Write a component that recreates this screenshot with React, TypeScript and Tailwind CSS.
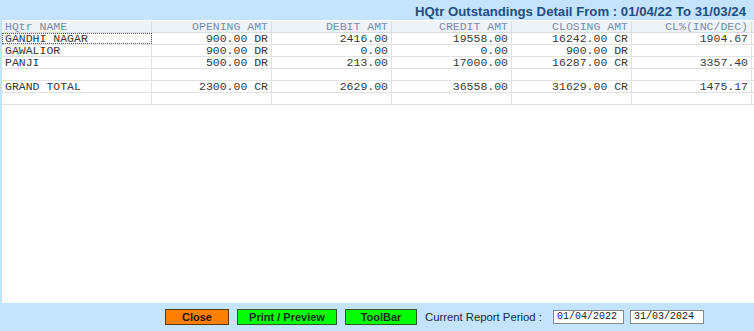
import React from "react";

const cols = [
  { label: "HQtr NAME", w: "w-[150px]", align: "text-left" },
  { label: "OPENING AMT", w: "w-[120px]", align: "text-right" },
  { label: "DEBIT AMT", w: "w-[120px]", align: "text-right" },
  { label: "CREDIT AMT", w: "w-[120px]", align: "text-right" },
  { label: "CLOSING AMT", w: "w-[120px]", align: "text-right" },
  { label: "CL%(INC/DEC)", w: "w-[120px]", align: "text-right" },
];

const rows: string[][] = [
  ["GANDHI NAGAR", "900.00 DR", "2416.00", "19558.00", "16242.00 CR", "1904.67"],
  ["GAWALIOR", "900.00 DR", "0.00", "0.00", "900.00 DR", ""],
  ["PANJI", "500.00 DR", "213.00", "17000.00", "16287.00 CR", "3357.40"],
  ["", "", "", "", "", ""],
  ["GRAND TOTAL", "2300.00 CR", "2629.00", "36558.00", "31629.00 CR", "1475.17"],
  ["", "", "", "", "", ""],
];

export default function App() {
  return (
    <div className="w-[754px] h-[331px] bg-[#c3e4fc] flex flex-col overflow-hidden">
      <div className="h-[20px] flex items-end justify-end pr-[8px] pb-[2px]">
        <span className="text-[13.2px] font-bold text-[#1f4d86] font-['Liberation_Sans',Arial,sans-serif] leading-none">
          HQtr Outstandings Detail From : 01/04/22 To 31/03/24
        </span>
      </div>
      <div className="ml-[2px] h-[283px] bg-white pt-[1px] font-['Liberation_Mono','Courier_New',monospace] text-[11.5px] leading-[11px]">
        <div className="flex h-[12px] bg-[#eef3f8] border-b border-[#d6dde6] text-[#7d8bab]">
          {cols.map((c, i) => (
            <div key={i} className={`${c.w} ${c.align} border-r border-[#d6dde6] px-[3px] overflow-hidden`}>
              {c.label}
            </div>
          ))}
        </div>
        {rows.map((r, ri) => (
          <div key={ri} className="flex h-[12px] border-b border-[#e2e2e2] text-[#3a3a3a]">
            {r.map((v, ci) => (
              <div
                key={ci}
                className={`${cols[ci].w} ${cols[ci].align} border-r border-[#e2e2e2] px-[3px] whitespace-pre overflow-hidden ${
                  ri === 0 && ci === 0 ? "outline outline-1 outline-dotted outline-[#555] -outline-offset-1" : ""
                }`}
              >
                {v}
              </div>
            ))}
          </div>
        ))}
      </div>
      <div className="flex-1 flex items-center pl-[165px] gap-[8px] font-['Liberation_Sans',Arial,sans-serif]">
        <button className="w-[64px] h-[16px] bg-[#ff7f00] border border-[#5a3a10] text-[11px] font-bold text-[#2a1200] leading-none">
          Close
        </button>
        <button className="w-[100px] h-[16px] bg-[#00ff00] border border-[#2a5a2a] text-[11px] font-bold text-[#142e14] leading-none">
          Print / Preview
        </button>
        <button className="w-[72px] h-[16px] bg-[#00ff00] border border-[#2a5a2a] text-[11px] font-bold text-[#142e14] leading-none">
          ToolBar
        </button>
        <span className="w-[120px] text-[11.3px] text-[#1a2a3a] whitespace-nowrap">Current Report Period :</span>
        <div className="w-[71px] h-[14px] bg-white border border-[#888] font-['Liberation_Mono','Courier_New',monospace] text-[10px] leading-[12px] px-[3px] text-[#222]">
          01/04/2022
        </div>
        <div className="w-[74px] h-[14px] bg-white border border-[#888] ml-[-2px] font-['Liberation_Mono','Courier_New',monospace] text-[10px] leading-[12px] px-[3px] text-[#222]">
          31/03/2024
        </div>
      </div>
    </div>
  );
}
